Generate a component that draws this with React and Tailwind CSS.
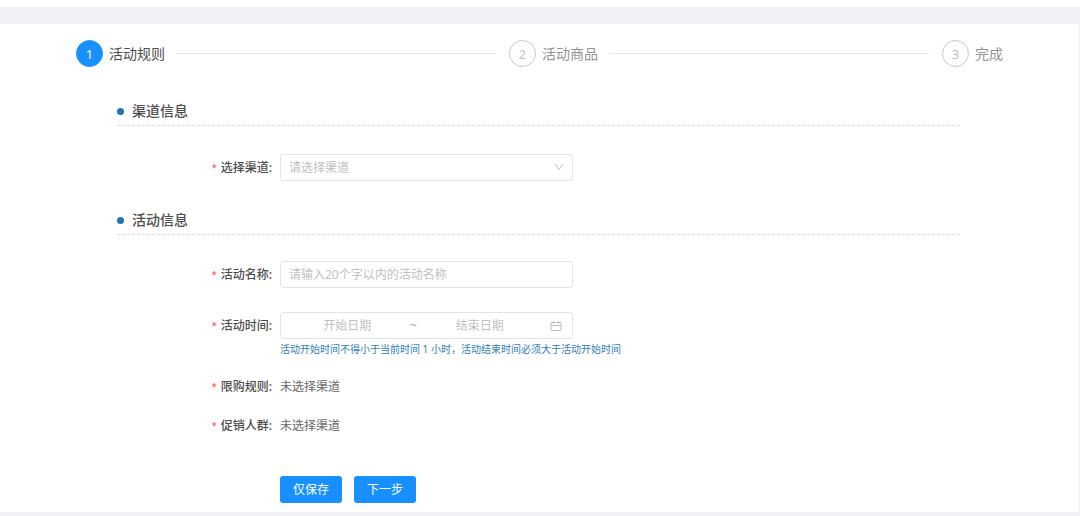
const STEPS = ['活动规则', '活动商品', '完成'];

function Steps({ current }) {
  return (
    <ol className="flex px-[76px]">
      {STEPS.map((title, i) => {
        const active = i === current;
        const last = i === STEPS.length - 1;
        return (
          <li key={title} className={`flex items-center ${last ? '' : 'flex-1'}`} aria-current={active ? 'step' : undefined}>
            <span
              className={`flex size-[27px] flex-shrink-0 items-center justify-center rounded-full border text-[13px] ${
                active ? 'border-[#1890ff] bg-[#1890ff] text-white' : 'border-[#c8c8c8] text-[#bfbfbf]'
              }`}
            >
              {i + 1}
            </span>
            <span className={`ml-1.5 whitespace-nowrap text-[14px] leading-5 ${active ? 'text-[#4d4d4d]' : 'text-[#949494]'}`}>{title}</span>
            {!last && <span className="mr-[13px] ml-[11px] h-px flex-1 bg-[#e4e4e4]" />}
          </li>
        );
      })}
    </ol>
  );
}

function SectionTitle({ children }) {
  return (
    <h2 className="flex items-center border-b border-dashed border-[#e2dcdc] pb-1 text-[14px] leading-5 font-medium text-[#4d4d4d]">
      <span className="mr-2 size-[7px] rounded-full bg-[#1f73b7]" />
      {children}
    </h2>
  );
}

function Field({ label, htmlFor, children }) {
  const Label = htmlFor ? 'label' : 'span';
  return (
    <div className="flex items-start">
      <div className="w-[163px] flex-shrink-0 pr-2 text-right">
        <Label htmlFor={htmlFor} className="inline-flex h-[27px] items-center font-medium text-[#4d4d4d]">
          <span className="mr-1 text-[9px] text-[#ff4d4f]">*</span>
          {label}
          <span>:</span>
        </Label>
      </div>
      <div className="min-w-0 flex-1">{children}</div>
    </div>
  );
}

function ChevronIcon() {
  return (
    <svg viewBox="0 0 10 8" className="pointer-events-none absolute top-[9px] right-[9px] h-2 w-2.5" fill="none" stroke="#bfbfbf">
      <path d="M1 1l4 5.5L9 1" />
    </svg>
  );
}

function CalendarIcon() {
  return (
    <svg viewBox="0 0 12 12" className="mr-2.5 ml-2 size-3 flex-shrink-0" fill="none" stroke="#bfbfbf">
      <path d="M1 2.5h10v8H1zM1 5.5h10M3.5 1v2.5M8.5 1v2.5" />
    </svg>
  );
}

const box = 'h-[27px] w-full max-w-[293px] rounded-[3px] border border-[#e4e4e4] bg-white';

export default function App() {
  return (
    <div className="border-t-[7px] border-white bg-[#f0f1f5] pt-[17px] pb-1 font-['Noto_Sans','Noto_Sans_CJK_SC',sans-serif] text-[12px] leading-5">
      <main className="mr-px bg-white pt-4 pb-[9px]">
        <Steps current={0} />

        <form className="mt-[34px] pr-[119px] pl-[117px]" onSubmit={(e) => e.preventDefault()}>
          <SectionTitle>渠道信息</SectionTitle>
          <div className="mt-7">
            <Field label="选择渠道" htmlFor="channel">
              <div className="relative w-full max-w-[293px]">
                <select id="channel" defaultValue="" className={`${box} block appearance-none px-2 text-[#bfbfbf] outline-none`}>
                  <option value="">请选择渠道</option>
                </select>
                <ChevronIcon />
              </div>
            </Field>
          </div>

          <div className="mt-[29px]">
            <SectionTitle>活动信息</SectionTitle>
          </div>
          <div className="mt-[26px] flex flex-col gap-6">
            <Field label="活动名称" htmlFor="name">
              <input
                id="name"
                type="text"
                maxLength={20}
                placeholder="请输入20个字以内的活动名称"
                className={`${box} block px-2 outline-none placeholder:text-[#bfbfbf]`}
              />
            </Field>
            <Field label="活动时间" htmlFor="start">
              <div className={`${box} flex items-center`}>
                <input
                  id="start"
                  type="text"
                  placeholder="开始日期"
                  className="ml-1 min-w-0 flex-1 text-center outline-none placeholder:text-[#bfbfbf]"
                />
                <span className="w-2 text-center text-[#a6a6a6]">~</span>
                <input
                  type="text"
                  aria-label="结束日期"
                  placeholder="结束日期"
                  className="min-w-0 flex-1 text-center outline-none placeholder:text-[#bfbfbf]"
                />
                <CalendarIcon />
              </div>
              <p className="mt-1 text-[10px] leading-3 text-[#2f7cbd]">
                活动开始时间不得小于当前时间 1 小时，活动结束时间必须大于活动开始时间
              </p>
            </Field>
          </div>

          <div className="mt-[18px] flex flex-col gap-3">
            <Field label="限购规则">
              <p className="leading-[27px] text-[#666]">未选择渠道</p>
            </Field>
            <Field label="促销人群">
              <p className="leading-[27px] text-[#666]">未选择渠道</p>
            </Field>
          </div>

          <div className="mt-[37px] flex gap-3 pl-[163px]">
            <button type="button" className="h-[27px] w-[62px] rounded-[3px] bg-[#1890ff] text-white">
              仅保存
            </button>
            <button type="submit" className="h-[27px] w-[62px] rounded-[3px] bg-[#1890ff] text-white">
              下一步
            </button>
          </div>
        </form>
      </main>
    </div>
  );
}
